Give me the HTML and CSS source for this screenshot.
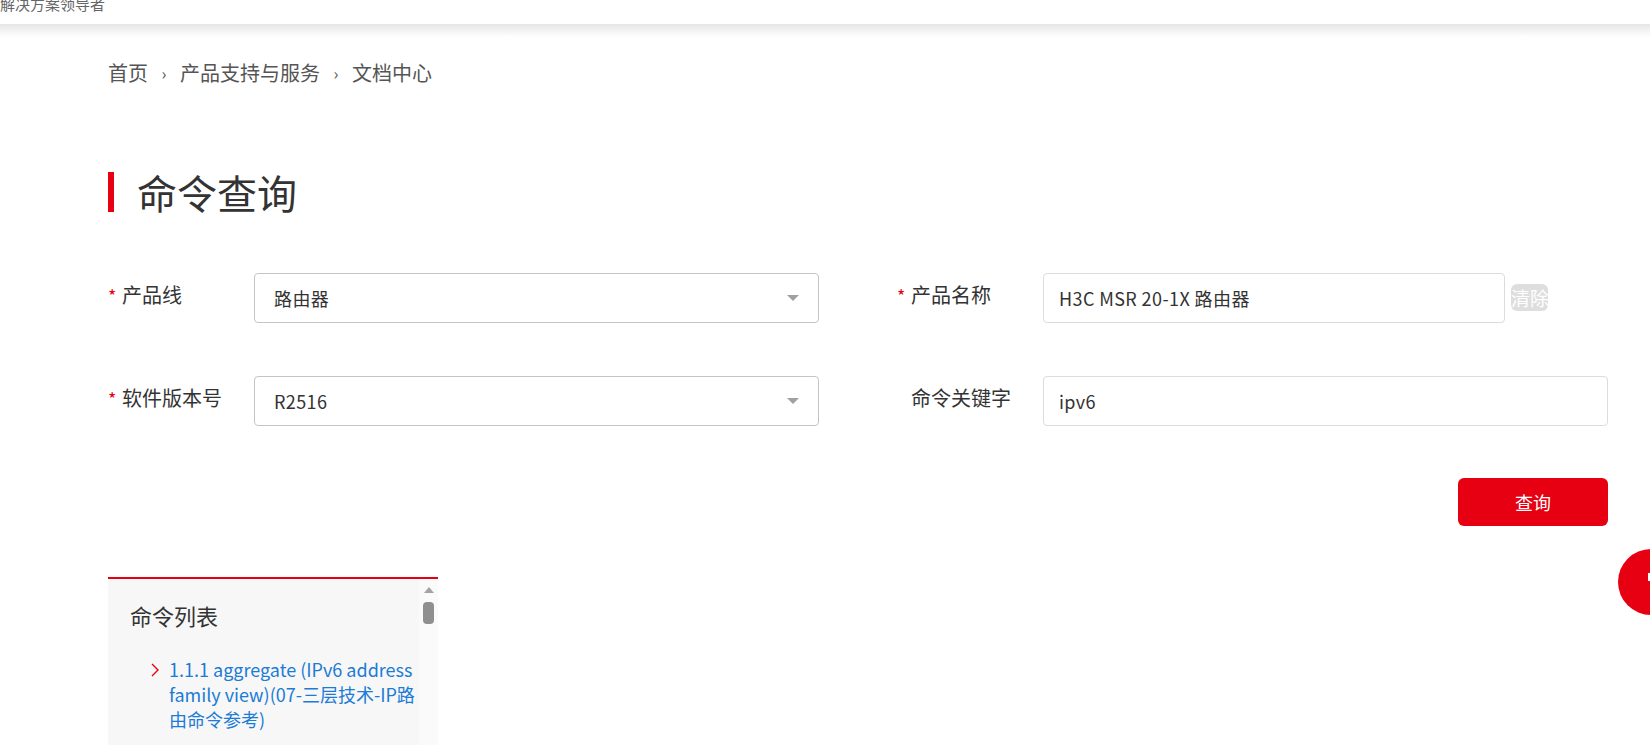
FILE: index.html
```html
<!DOCTYPE html>
<html lang="zh-CN">
<head>
    <meta charset="UTF-8">
    <meta name="viewport" content="width=device-width, initial-scale=1.0">
    <title>命令查询</title>
    <link rel="stylesheet" href="styles.css">
</head>
<body>
    <div class="topbar"><span class="slogan">解决方案领导者</span></div>
    <div class="topbar-shade"></div>

    <div class="container">
        <div class="crumbs">
            <span>首页</span><span class="sep">›</span><span>产品支持与服务</span><span class="sep">›</span><span>文档中心</span>
        </div>

        <h1 class="page-title">命令查询</h1>

        <form class="query-form">
            <div class="form-row">
                <label class="form-label"><i class="req">*</i>产品线</label>
                <div class="select"><span>路由器</span><span class="caret"></span></div>
            </div>
            <div class="form-row">
                <label class="form-label"><i class="req">*</i>产品名称</label>
                <div class="field field-short">H3C MSR 20-1X 路由器</div>
                <span class="clear-btn">清除</span>
            </div>
            <div class="form-row">
                <label class="form-label"><i class="req">*</i>软件版本号</label>
                <div class="select"><span>R2516</span><span class="caret"></span></div>
            </div>
            <div class="form-row">
                <label class="form-label"><i class="req"></i>命令关键字</label>
                <div class="field">ipv6</div>
            </div>
        </form>

        <div class="actions">
            <button type="button" class="btn-query">查询</button>
        </div>

        <div class="cmd-panel">
            <div class="cmd-body">
                <h3>命令列表</h3>
                <ul class="cmd-list">
                    <li>
                        <svg class="chev" width="8" height="14" viewBox="0 0 8 14"><polyline points="1,1 7,7 1,13" fill="none" stroke="#e60012" stroke-width="1.4"/></svg>
                        <a href="#">1.1.1 aggregate (IPv6 address family view)(07-三层技术-IP路由命令参考)</a>
                    </li>
                </ul>
            </div>
            <div class="scroll-track">
                <span class="scroll-up"></span>
                <span class="scroll-thumb"></span>
            </div>
        </div>
    </div>

    <div class="float-btn"><span></span></div>
</body>
</html>
```

FILE: styles.css
```css
html {
    overflow: hidden;
}
body {
    margin: 0;
    font-family: "Noto Sans CJK SC", "Noto Sans", sans-serif;
    color: #333;
    background: #fff;
}
.topbar {
    height: 24px;
    overflow: hidden;
    background: #fff;
}
.slogan {
    display: block;
    margin-top: -4px;
    font-size: 15px;
    line-height: 15px;
    color: #666;
}
.topbar-shade {
    height: 13px;
    background: linear-gradient(#e6e6e6, #fff);
}
.container {
    width: 1500px;
    padding-left: 108px;
}
.crumbs {
    margin-top: 26px;
    font-size: 20px;
    line-height: 20px;
    color: #555;
    display: flex;
}
.crumbs .sep {
    width: 32px;
    text-align: center;
    font-size: 16px;
}
.page-title {
    margin: 89px 0 0;
    height: 40px;
    border-left: 6px solid #e60012;
    padding-left: 23px;
    font-size: 40px;
    line-height: 40px;
    font-weight: normal;
    color: #333;
}
.query-form {
    margin-top: 61px;
    display: grid;
    grid-template-columns: 711px 711px;
    column-gap: 78px;
    row-gap: 53px;
}
.form-row {
    display: flex;
    align-items: flex-start;
    height: 50px;
}
.form-label {
    width: 146px;
    flex: none;
    padding-top: 11px;
    font-size: 20px;
    line-height: 22px;
    color: #333;
}
.req {
    display: inline-block;
    width: 14px;
    font-style: normal;
    color: #e60012;
    font-size: 18px;
}
.select,
.field {
    box-sizing: border-box;
    height: 50px;
    border-radius: 4px;
    font-size: 18px;
    letter-spacing: 0.4px;
    color: #333;
    display: flex;
    align-items: center;
}
.select {
    flex: 1;
    border: 1px solid #c4c4c4;
    padding: 0 19px 0 19px;
    justify-content: space-between;
}
.caret {
    width: 0;
    height: 0;
    border-left: 6px solid transparent;
    border-right: 6px solid transparent;
    border-top: 6px solid #a0a0a0;
}
.field {
    flex: 1;
    border: 1px solid #dcdcdc;
    padding: 0 15px;
}
.field-short {
    flex: none;
    width: 462px;
}
.clear-btn {
    margin: 11px 0 0 6px;
    width: 37px;
    height: 27px;
    border-radius: 6px;
    background: #dedede;
    color: #fff;
    font-size: 19px;
    line-height: 27px;
    white-space: nowrap;
    overflow: hidden;
}
.actions {
    margin-top: 52px;
    display: flex;
    justify-content: flex-end;
}
.btn-query {
    width: 150px;
    height: 48px;
    border: none;
    border-radius: 6px;
    background: #e60012;
    color: #fff;
    font-family: inherit;
    font-size: 18px;
    cursor: pointer;
}
.cmd-panel {
    margin-top: 51px;
    width: 330px;
    height: 220px;
    border-top: 2px solid #e60012;
    display: flex;
}
.cmd-body {
    flex: 1;
    background: #f7f7f7;
    padding: 21px 0 0 22px;
}
.cmd-body h3 {
    margin: 0;
    font-size: 22px;
    line-height: 30px;
    font-weight: normal;
    color: #333;
}
.cmd-list {
    list-style: none;
    margin: 27px 0 0;
    padding: 0 0 0 21px;
}
.cmd-list li {
    display: flex;
    align-items: flex-start;
}
.chev {
    flex: none;
    margin: 6px 10px 0 0;
}
.cmd-list a {
    color: #1b7bd6;
    text-decoration: none;
    font-size: 18px;
    line-height: 25px;
}
.scroll-track {
    width: 19px;
    background: #fafafa;
    display: flex;
    flex-direction: column;
    align-items: center;
}
.scroll-up {
    margin-top: 8px;
    width: 0;
    height: 0;
    border-left: 5px solid transparent;
    border-right: 5px solid transparent;
    border-bottom: 6px solid #a3a3a3;
}
.scroll-thumb {
    margin-top: 9px;
    width: 11px;
    height: 22px;
    border-radius: 4px;
    background: #8f8f8f;
}
.float-btn {
    position: fixed;
    right: -34px;
    top: 549px;
    width: 66px;
    height: 66px;
    border-radius: 50%;
    background: #e60012;
}
.float-btn span {
    position: absolute;
    left: 30px;
    top: 24px;
    width: 3px;
    height: 8px;
    background: #fff;
}
```
